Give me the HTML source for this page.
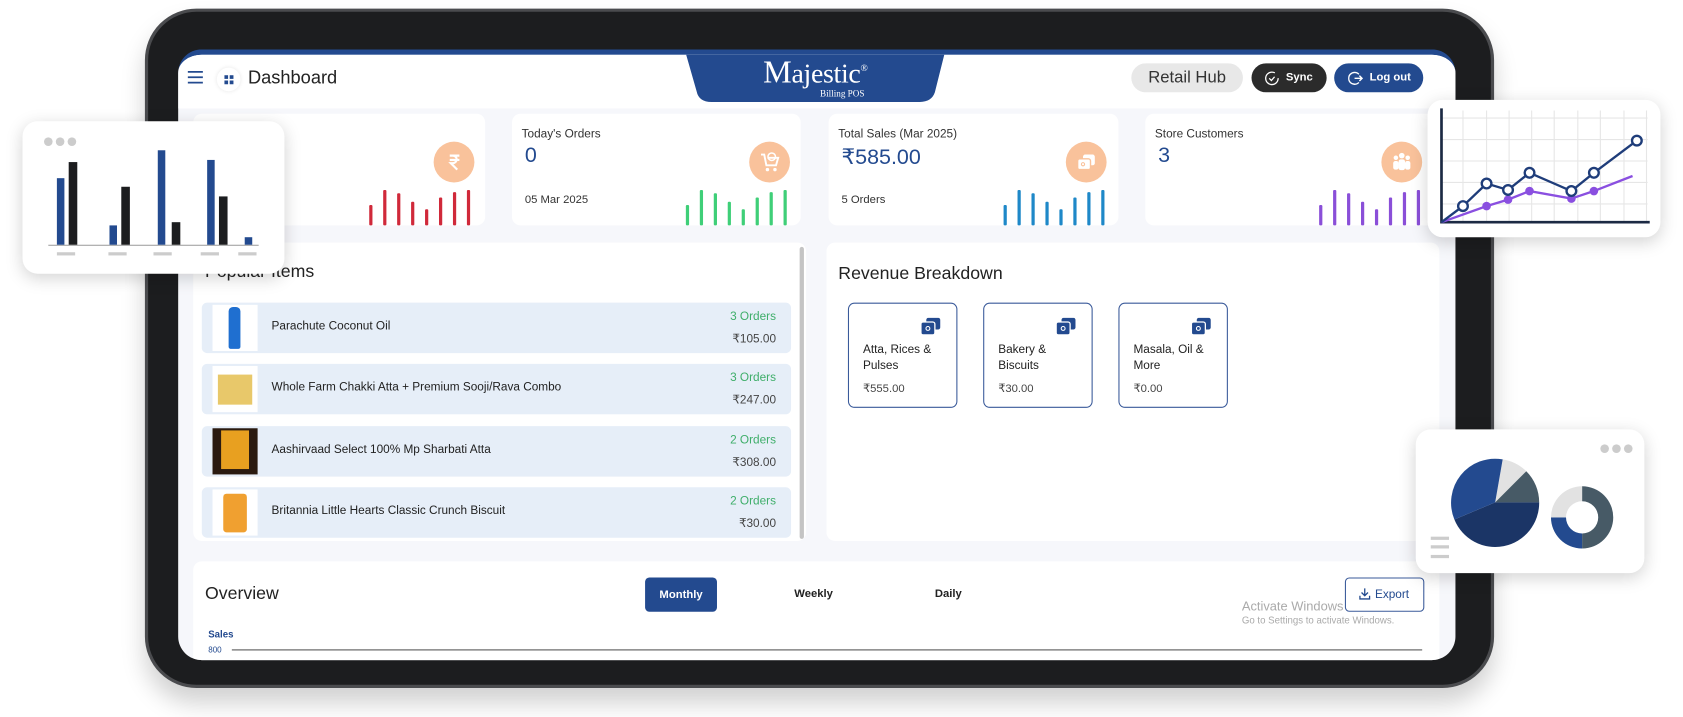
<!DOCTYPE html>
<html><head><meta charset="utf-8">
<style>
*{margin:0;padding:0;box-sizing:border-box}
body{width:1683px;height:717px;overflow:hidden;background:#fff;font-family:"Liberation Sans",sans-serif;color:#222}
#w{position:absolute;left:0;top:0;width:1568px;height:668px;transform:scale(1.07334);transform-origin:0 0}
.a{position:absolute}
.tab{left:135px;top:8px;width:1257px;height:633px;background:#1c1d1f;border-radius:48px;border:3px solid #4a4b4e;box-shadow:0 14px 22px rgba(0,0,0,.18)}
.scr{left:166px;top:46px;width:1190px;height:569px;background:#f6f7fb;border-radius:22px 22px 22px 22px;overflow:hidden;border-top:5px solid #234a8f}
.card{background:#fff;border-radius:8px}
.bar{position:absolute;bottom:0;width:3px;border-radius:1px}
.t11{font-size:11px;color:#333}
.row{position:absolute;left:8px;width:549px;height:47px;background:#e6eef8;border-radius:5px}
.row .im{position:absolute;left:10px;top:2px;width:42px;height:43px;background:#fff}
.row .n{position:absolute;left:65px;top:16px;font-size:11px;color:#222}
.row .o{position:absolute;right:14px;top:7px;font-size:11px;color:#3fae6a}
.row .p{position:absolute;right:14px;top:27px;font-size:11px;color:#444}
.rc{position:absolute;top:56px;width:102px;height:98px;border:1px solid #3a5a9a;border-radius:6px;background:#fff}
.rc .ic{position:absolute;right:14px;top:13px}
.rc .l{position:absolute;left:13px;top:36px;font-size:11px;line-height:15px;color:#222}
.rc .v{position:absolute;left:13px;top:73px;font-size:10.5px;color:#444}
.fc{background:#fff;border-radius:14px;box-shadow:0 4px 16px rgba(0,0,0,.18)}
.ic19{position:absolute;width:38px;height:38px;border-radius:50%;background:#f9c29b}
.ic19 svg{position:absolute;left:9px;top:9px}
</style></head><body><div id="w">

<div class="a tab"></div>
<div class="a scr">
  <div class="a" style="left:0;top:0;width:1190px;height:50px;background:#fff"></div>
  <svg class="a" style="left:8px;top:15px" width="16" height="12"><path d="M1 1h14M1 6h14M1 11h14" stroke="#234a8f" stroke-width="1.6"/></svg>
  <div class="a" style="left:36px;top:12px;width:22px;height:22px;border-radius:50%;background:#fff;box-shadow:0 0 4px rgba(0,0,0,.1)"></div>
  <svg class="a" style="left:43px;top:19px" width="9" height="9"><rect x="0" y="0" width="3.5" height="3.5" fill="#234a8f"/><rect x="5" y="0" width="3.5" height="3.5" fill="#234a8f"/><rect x="0" y="5" width="3.5" height="3.5" fill="#234a8f"/><rect x="5" y="5" width="3.5" height="3.5" fill="#234a8f"/></svg>
  <div class="a" style="left:65px;top:12px;font-size:17px;color:#222">Dashboard</div>
  <svg class="a" style="left:473px;top:-1px" width="242" height="46"><path d="M0 0H241L232 36Q229 45 218 45H24Q12 45 10 35Z" fill="#234a8f"/></svg>
  <div class="a" style="left:545px;top:0px;font-family:'Liberation Serif',serif;color:#fff;font-size:30px;letter-spacing:-0.3px">M<span style="font-size:26px">ajestic</span><sup style="font-size:9px">®</sup></div>
  <div class="a" style="left:598px;top:31px;font-family:'Liberation Serif',serif;color:#fff;font-size:8.5px">Billing POS</div>
  <div class="a" style="left:888px;top:8px;width:104px;height:27px;border-radius:14px;background:#e8e8e8;font-size:15.5px;text-align:center;line-height:27px;color:#333">Retail Hub</div>
  <div class="a" style="left:1000px;top:8px;width:70px;height:27px;border-radius:14px;background:#2b2b2b;color:#fff;font-size:10.5px;font-weight:bold;line-height:27px;padding-left:32px">Sync</div>
  <svg class="a" style="left:1012px;top:15px" width="14" height="14"><circle cx="7" cy="7" r="5.8" fill="none" stroke="#fff" stroke-width="1.2" stroke-dasharray="30 6"/><path d="M4.5 7l2 2 3-3.5" fill="none" stroke="#fff" stroke-width="1.2"/></svg>
  <div class="a" style="left:1077px;top:8px;width:83px;height:27px;border-radius:14px;background:#234a8f;color:#fff;font-size:10.5px;font-weight:bold;line-height:27px;padding-left:33px">Log out</div>
  <svg class="a" style="left:1090px;top:15px" width="14" height="14"><path d="M10 3.2A5.5 5.5 0 1 0 10 10.8" fill="none" stroke="#fff" stroke-width="1.3"/><path d="M6 7h7M10.5 4.5L13 7l-2.5 2.5" fill="none" stroke="#fff" stroke-width="1.3"/></svg>

  <div class="a card" style="left:14px;top:55px;width:272px;height:104px">
    <div class="ic19" style="left:224px;top:26px"><svg width="20" height="20"><path d="M6 4h9M6 8h9M7 4h2a3 3 0 0 1 0 7H7l6 6" fill="none" stroke="#fff" stroke-width="2"/></svg></div>
    <div class="a" style="left:164px;top:68px;width:100px;height:36px">
      <div class="bar" style="left:0;height:19px;background:#d0293a"></div><div class="bar" style="left:13px;height:33px;background:#d0293a"></div><div class="bar" style="left:26px;height:30px;background:#d0293a"></div><div class="bar" style="left:39px;height:22px;background:#d0293a"></div><div class="bar" style="left:52px;height:15px;background:#d0293a"></div><div class="bar" style="left:65px;height:26px;background:#d0293a"></div><div class="bar" style="left:78px;height:31px;background:#d0293a"></div><div class="bar" style="left:91px;height:33px;background:#d0293a"></div>
    </div>
  </div>
  <div class="a card" style="left:311px;top:55px;width:269px;height:104px">
    <div class="a t11" style="left:9px;top:13px">Today's Orders</div>
    <div class="a" style="left:12px;top:28px;font-size:20px;color:#234a8f">0</div>
    <div class="a t11" style="left:12px;top:74px;font-size:10.5px">05 Mar 2025</div>
    <div class="ic19" style="left:221px;top:26px"><svg width="20" height="20"><path d="M2 3h3l2 10h9l2-7H8" fill="none" stroke="#fff" stroke-width="1.8"/><circle cx="12" cy="5" r="3.5" fill="none" stroke="#fff" stroke-width="1.4"/><circle cx="8" cy="17" r="1.6" fill="#fff"/><circle cx="15" cy="17" r="1.6" fill="#fff"/></svg></div>
    <div class="a" style="left:162px;top:68px;width:100px;height:36px">
      <div class="bar" style="left:0;height:19px;background:#3fcf78"></div><div class="bar" style="left:13px;height:33px;background:#3fcf78"></div><div class="bar" style="left:26px;height:30px;background:#3fcf78"></div><div class="bar" style="left:39px;height:22px;background:#3fcf78"></div><div class="bar" style="left:52px;height:15px;background:#3fcf78"></div><div class="bar" style="left:65px;height:26px;background:#3fcf78"></div><div class="bar" style="left:78px;height:31px;background:#3fcf78"></div><div class="bar" style="left:91px;height:33px;background:#3fcf78"></div>
    </div>
  </div>
  <div class="a card" style="left:606px;top:55px;width:270px;height:104px">
    <div class="a t11" style="left:9px;top:13px">Total Sales (Mar 2025)</div>
    <div class="a" style="left:12px;top:28px;font-size:20px;color:#234a8f">₹585.00</div>
    <div class="a t11" style="left:12px;top:74px;font-size:10.5px">5 Orders</div>
    <div class="ic19" style="left:221px;top:26px"><svg width="20" height="20"><rect x="7" y="3" width="11" height="10" rx="2" fill="#fff"/><rect x="2" y="7" width="12" height="10" rx="2" fill="#fff" stroke="#f9c29b" stroke-width="1.3"/><circle cx="7" cy="12" r="1.5" fill="none" stroke="#f9c29b"/></svg></div>
    <div class="a" style="left:163px;top:68px;width:100px;height:36px">
      <div class="bar" style="left:0;height:19px;background:#1e88c8"></div><div class="bar" style="left:13px;height:33px;background:#1e88c8"></div><div class="bar" style="left:26px;height:30px;background:#1e88c8"></div><div class="bar" style="left:39px;height:22px;background:#1e88c8"></div><div class="bar" style="left:52px;height:15px;background:#1e88c8"></div><div class="bar" style="left:65px;height:26px;background:#1e88c8"></div><div class="bar" style="left:78px;height:31px;background:#1e88c8"></div><div class="bar" style="left:91px;height:33px;background:#1e88c8"></div>
    </div>
  </div>
  <div class="a card" style="left:901px;top:55px;width:270px;height:104px">
    <div class="a t11" style="left:9px;top:13px">Store Customers</div>
    <div class="a" style="left:12px;top:28px;font-size:20px;color:#234a8f">3</div>
    <div class="ic19" style="left:220px;top:26px"><svg width="20" height="20"><circle cx="10" cy="4" r="2.6" fill="#fff"/><circle cx="4.5" cy="6" r="2.1" fill="#fff"/><circle cx="15.5" cy="6" r="2.1" fill="#fff"/><rect x="7" y="7.5" width="6" height="10" rx="2" fill="#fff"/><rect x="2" y="9" width="5" height="8" rx="2" fill="#fff"/><rect x="13" y="9" width="5" height="8" rx="2" fill="#fff"/></svg></div>
    <div class="a" style="left:162px;top:68px;width:100px;height:36px">
      <div class="bar" style="left:0;height:19px;background:#8a4fd8"></div><div class="bar" style="left:13px;height:33px;background:#8a4fd8"></div><div class="bar" style="left:26px;height:30px;background:#8a4fd8"></div><div class="bar" style="left:39px;height:22px;background:#8a4fd8"></div><div class="bar" style="left:52px;height:15px;background:#8a4fd8"></div><div class="bar" style="left:65px;height:26px;background:#8a4fd8"></div><div class="bar" style="left:78px;height:31px;background:#8a4fd8"></div><div class="bar" style="left:91px;height:33px;background:#8a4fd8"></div>
    </div>
  </div>

  <div class="a card" style="left:14px;top:175px;width:571px;height:278px;overflow:hidden">
    <div class="a" style="left:11px;top:18px;font-size:16.5px;color:#222">Popular Items</div>
    <div class="row" style="top:56px"><div class="im"><div class="a" style="left:15px;top:2px;width:11px;height:39px;background:#1f6fd0;border-radius:4px 4px 2px 2px"></div></div><div class="n">Parachute Coconut Oil</div><div class="o">3 Orders</div><div class="p">₹105.00</div></div>
    <div class="row" style="top:113px"><div class="im"><div class="a" style="left:5px;top:8px;width:32px;height:28px;background:#e8c86a"></div></div><div class="n">Whole Farm Chakki Atta + Premium Sooji/Rava Combo</div><div class="o">3 Orders</div><div class="p">₹247.00</div></div>
    <div class="row" style="top:171px"><div class="im" style="background:#2a1a10"><div class="a" style="left:8px;top:2px;width:26px;height:36px;background:#e8a020"></div></div><div class="n">Aashirvaad Select 100% Mp Sharbati Atta</div><div class="o">2 Orders</div><div class="p">₹308.00</div></div>
    <div class="row" style="top:228px"><div class="im"><div class="a" style="left:10px;top:4px;width:22px;height:36px;background:#f0a030;border-radius:3px"></div></div><div class="n">Britannia Little Hearts Classic Crunch Biscuit</div><div class="o">2 Orders</div><div class="p">₹30.00</div></div>
  </div>
  <div class="a" style="left:579px;top:179px;width:4px;height:272px;background:#c4c4c4;border-radius:2px"></div>

  <div class="a card" style="left:604px;top:175px;width:571px;height:278px">
    <div class="a" style="left:11px;top:20px;font-size:16.5px;color:#222">Revenue Breakdown</div>
    <div class="rc" style="left:20px"><svg class="ic" width="20" height="17"><rect x="6" y="0" width="13" height="11" rx="2" fill="#234a8f"/><rect x="1" y="4" width="13" height="12" rx="2" fill="#234a8f" stroke="#fff" stroke-width="1.2"/><circle cx="7.5" cy="10" r="1.8" fill="none" stroke="#fff"/></svg><div class="l">Atta, Rices &amp;<br>Pulses</div><div class="v">₹555.00</div></div>
    <div class="rc" style="left:146px"><svg class="ic" width="20" height="17"><rect x="6" y="0" width="13" height="11" rx="2" fill="#234a8f"/><rect x="1" y="4" width="13" height="12" rx="2" fill="#234a8f" stroke="#fff" stroke-width="1.2"/><circle cx="7.5" cy="10" r="1.8" fill="none" stroke="#fff"/></svg><div class="l">Bakery &amp;<br>Biscuits</div><div class="v">₹30.00</div></div>
    <div class="rc" style="left:272px"><svg class="ic" width="20" height="17"><rect x="6" y="0" width="13" height="11" rx="2" fill="#234a8f"/><rect x="1" y="4" width="13" height="12" rx="2" fill="#234a8f" stroke="#fff" stroke-width="1.2"/><circle cx="7.5" cy="10" r="1.8" fill="none" stroke="#fff"/></svg><div class="l">Masala, Oil &amp;<br>More</div><div class="v">₹0.00</div></div>
  </div>

  <div class="a card" style="left:14px;top:472px;width:1161px;height:120px">
    <div class="a" style="left:11px;top:21px;font-size:16.5px;color:#222">Overview</div>
    <div class="a" style="left:421px;top:15px;width:67px;height:32px;background:#234a8f;border-radius:4px;color:#fff;font-size:10.5px;font-weight:bold;text-align:center;line-height:32px">Monthly</div>
    <div class="a" style="left:560px;top:24px;font-size:10.5px;font-weight:bold">Weekly</div>
    <div class="a" style="left:691px;top:24px;font-size:10.5px;font-weight:bold">Daily</div>
    <div class="a" style="left:977px;top:35px;font-size:12px;color:#aaa">Activate Windows</div>
    <div class="a" style="left:977px;top:50px;font-size:9px;color:#aaa">Go to Settings to activate Windows.</div>
    <div class="a" style="left:1073px;top:15px;width:74px;height:32px;border:1px solid #3a5a9a;border-radius:4px;background:#fff;color:#234a8f;font-size:11px;line-height:30px;padding-left:27px">Export</div>
    <svg class="a" style="left:1086px;top:25px" width="11" height="11"><path d="M5.5 0v7M2.5 4l3 3 3-3M1 7v3h9V7" fill="none" stroke="#234a8f" stroke-width="1.2"/></svg>
    <div class="a" style="left:14px;top:63px;font-size:9px;font-weight:bold;color:#234a8f">Sales</div>
    <div class="a" style="left:14px;top:78px;font-size:7.5px;color:#234a8f">800</div>
    <div class="a" style="left:36px;top:82px;width:1109px;height:1px;background:#555"></div>
  </div>
</div>

<div class="a fc" style="left:21px;top:113px;width:244px;height:142px">
  <div class="a" style="left:20px;top:15px;width:8px;height:8px;border-radius:50%;background:#ccc"></div>
  <div class="a" style="left:31px;top:15px;width:8px;height:8px;border-radius:50%;background:#ccc"></div>
  <div class="a" style="left:42px;top:15px;width:8px;height:8px;border-radius:50%;background:#ccc"></div>
  <svg class="a" style="left:0;top:0" width="244" height="142">
    <line x1="24" y1="115.5" x2="220" y2="115.5" stroke="#999" stroke-width="1"/>
    <rect x="32" y="53" width="7" height="62" fill="#234a8f"/><rect x="43" y="38" width="8" height="77" fill="#1c1d1f"/>
    <rect x="81" y="97" width="7" height="18" fill="#234a8f"/><rect x="92" y="61" width="8" height="54" fill="#1c1d1f"/>
    <rect x="126" y="27" width="7" height="88" fill="#234a8f"/><rect x="139" y="94" width="8" height="21" fill="#1c1d1f"/>
    <rect x="172" y="36" width="7" height="79" fill="#234a8f"/><rect x="183" y="70" width="8" height="45" fill="#1c1d1f"/>
    <rect x="207" y="108" width="7" height="7" fill="#234a8f"/>
    <rect x="32" y="122" width="17" height="3" fill="#ccc"/><rect x="80" y="122" width="17" height="3" fill="#ccc"/><rect x="122" y="122" width="17" height="3" fill="#ccc"/><rect x="166" y="122" width="17" height="3" fill="#ccc"/><rect x="201" y="122" width="17" height="3" fill="#ccc"/>
  </svg>
</div>

<div class="a fc" style="left:1330px;top:93px;width:217px;height:128px">
  <svg class="a" style="left:0;top:0" width="217" height="128">
    <g stroke="#e6e6e6" stroke-width="1">
      <path d="M13 17H205M13 37H205M13 57H205M13 77H205M13 97H205"/>
      <path d="M33 10V114M55 10V114M76 10V114M97 10V114M118 10V114M140 10V114M161 10V114M183 10V114M204 10V114"/>
    </g>
    <path d="M13 8V114H207" fill="none" stroke="#1c2a44" stroke-width="2.5"/>
    <polyline points="13,114 55,99 75,93 95,85 134,92 155,85 191,71" fill="none" stroke="#8a4fe0" stroke-width="2.2"/>
    <g fill="#8a4fe0"><circle cx="55" cy="99" r="4"/><circle cx="75" cy="93" r="4"/><circle cx="95" cy="85" r="4"/><circle cx="134" cy="92" r="4"/><circle cx="155" cy="85" r="4"/></g>
    <polyline points="13,114 33,99 55,78 75,84 95,68 134,85 155,68 195,38" fill="none" stroke="#1f3d7a" stroke-width="2.2"/>
    <g fill="#fff" stroke="#1f3d7a" stroke-width="2.2"><circle cx="33" cy="99" r="4.5"/><circle cx="55" cy="78" r="4.5"/><circle cx="75" cy="84" r="4.5"/><circle cx="95" cy="68" r="4.5"/><circle cx="134" cy="85" r="4.5"/><circle cx="155" cy="68" r="4.5"/><circle cx="195" cy="38" r="4.5"/></g>
  </svg>
</div>

<div class="a fc" style="left:1319px;top:400px;width:213px;height:134px">
  <svg class="a" style="left:0;top:0" width="213" height="134">
    <circle cx="176" cy="18" r="4" fill="#ccc"/><circle cx="187" cy="18" r="4" fill="#ccc"/><circle cx="198" cy="18" r="4" fill="#ccc"/>
    <rect x="14" y="100" width="17" height="3" fill="#ccc"/><rect x="14" y="108" width="17" height="3" fill="#ccc"/><rect x="14" y="117" width="17" height="3" fill="#ccc"/>
    <g transform="translate(74,68)">
      <path d="M0 0L7 -40A41 41 0 0 1 29 -29Z" fill="#e2e2e2"/>
      <path d="M0 0L29 -29A41 41 0 0 1 41 0Z" fill="#475a66"/>
      <path d="M0 0L41 0A41 41 0 0 1 -38 16Z" fill="#1b3566"/>
      <path d="M0 0L-38 16A41 41 0 0 1 7 -40Z" fill="#234a8f"/>
    </g>
    <g transform="translate(155,82)">
      <path d="M0 -29A29 29 0 0 1 0 29V15A15 15 0 0 0 0 -15Z" fill="#475a66"/>
      <path d="M0 29A29 29 0 0 1 -29 0H-15A15 15 0 0 0 0 15Z" fill="#234a8f"/>
      <path d="M-29 0A29 29 0 0 1 0 -29V-15A15 15 0 0 0 -15 0Z" fill="#e2e2e2"/>
    </g>
  </svg>
</div>

</div></body></html>
